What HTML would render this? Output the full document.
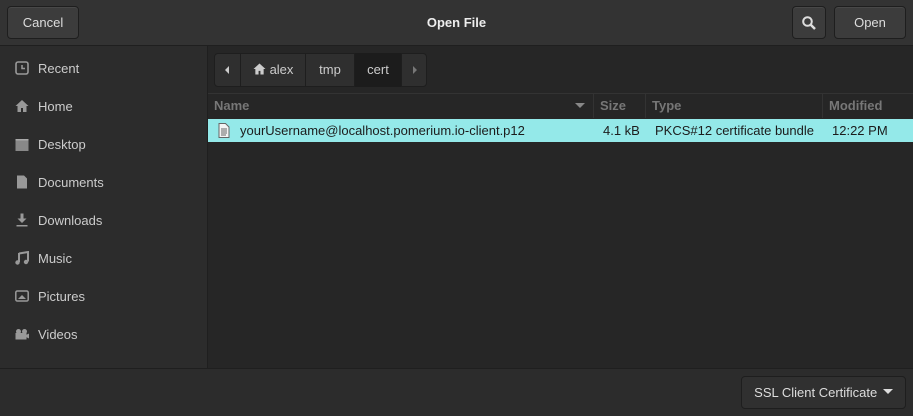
<!DOCTYPE html>
<html><head><style>
*{margin:0;padding:0;box-sizing:border-box}
body{width:913px;height:416px;background:#262626;font-family:"Liberation Sans",sans-serif;font-size:13px;color:#ddd;position:relative;overflow:hidden}
.abs{position:absolute}
.hdr{left:0;top:0;width:913px;height:46px;background:#333;border-bottom:1px solid #1f1f1f}
.btn{position:absolute;top:6px;height:33px;background:#3c3c3c;border:1px solid #1e1e1e;border-radius:4px;color:#ddd;text-align:center;line-height:31px;box-shadow:inset 0 1px #484848}
.side{left:0;top:46px;width:208px;height:322px;background:#2c2c2c;border-right:1px solid #1f1f1f}
.si{position:absolute;left:38px;color:#ccc}
.ic{position:absolute;left:15px;width:14px;height:14px}
.pb{top:53px;height:34px;background:#2f2f2f;border:1px solid #1e1e1e;border-radius:4px}
.seg{position:absolute;top:53px;height:34px;line-height:33px;color:#ccc;border-right:1px solid #1e1e1e;text-align:center}
.col{position:absolute;top:94px;height:24px;line-height:23px;color:#777;font-weight:bold;border-right:1px solid #333;padding-left:6px}
.row{left:208px;top:119px;width:705px;height:23px;background:#94e9e9;color:#1c1c1c}
.row span{position:absolute;top:4px}
.foot{left:0;top:368px;width:913px;height:48px;background:#2c2c2c;border-top:1px solid #1f1f1f}
</style></head><body>
<div class="abs hdr"></div>
<div class="btn" style="left:7px;width:72px">Cancel</div>
<div class="abs" style="left:0;width:913px;top:15px;text-align:center;font-weight:bold;color:#eee">Open File</div>
<div class="btn" style="left:792px;width:34px"><svg width="16" height="16" viewBox="0 0 16 16" style="margin-top:8px"><circle cx="6.5" cy="6.5" r="4.3" fill="none" stroke="#ddd" stroke-width="2"/><path d="M9.5 9.5L14 14" stroke="#ddd" stroke-width="2.5"/></svg></div>
<div class="btn" style="left:834px;width:72px">Open</div>

<div class="abs side"></div>
<svg class="ic" style="top:61px" viewBox="0 0 14 14"><rect x="1" y="1" width="12" height="12" rx="2" fill="none" stroke="#999" stroke-width="1.6"/><path d="M7 4v3.5h3" stroke="#999" stroke-width="1.5" fill="none"/></svg>
<div class="si" style="top:61px">Recent</div>
<svg class="ic" style="top:99px" viewBox="0 0 14 14"><path d="M7 1L0.5 7H2.5v6h3.5v-4h2v4h3.5V7h2z" fill="#999"/></svg>
<div class="si" style="top:99px">Home</div>
<svg class="ic" style="top:138px" viewBox="0 0 14 14"><rect x="0.5" y="1" width="13" height="12" fill="#888"/><rect x="0.5" y="1" width="13" height="1.5" fill="#aaa"/></svg>
<div class="si" style="top:137px">Desktop</div>
<svg class="ic" style="top:175px" viewBox="0 0 14 14"><path d="M2 0.5h7l3 3V13.5H2z" fill="#999"/></svg>
<div class="si" style="top:175px">Documents</div>
<svg class="ic" style="top:213px" viewBox="0 0 14 14"><path d="M5.5 0.5h3v5h3L7 10 2.5 5.5h3z" fill="#999"/><rect x="1.5" y="12" width="11" height="1.5" fill="#999"/></svg>
<div class="si" style="top:213px">Downloads</div>
<svg class="ic" style="top:251px" viewBox="0 0 14 14"><path d="M4 2.5L13 1v9.5" stroke="#999" stroke-width="2" fill="none"/><path d="M4 2v9" stroke="#999" stroke-width="2"/><circle cx="2.5" cy="11.5" r="2.2" fill="#999"/><circle cx="11" cy="11" r="2.2" fill="#999"/></svg>
<div class="si" style="top:251px">Music</div>
<svg class="ic" style="top:289px" viewBox="0 0 14 14"><rect x="0.8" y="2" width="12.4" height="10" rx="1.5" fill="none" stroke="#999" stroke-width="1.5"/><path d="M3 10l4-4 4 4z" fill="#999"/></svg>
<div class="si" style="top:289px">Pictures</div>
<svg class="ic" style="top:327px" viewBox="0 0 14 14"><circle cx="3.5" cy="4.5" r="2.5" fill="#999"/><circle cx="9.5" cy="4.5" r="2.5" fill="#999"/><rect x="0.5" y="6" width="11" height="6.5" fill="#999"/><path d="M11 8l3-1.5v5L11 10z" fill="#999"/></svg>
<div class="si" style="top:327px">Videos</div>

<div class="abs pb" style="left:214px;width:213px"></div>
<div class="seg" style="left:214px;width:27px"><svg width="8" height="10" viewBox="0 0 8 10" style="margin-top:12px"><path d="M6 1L2 5l4 4z" fill="#ccc"/></svg></div>
<div class="seg" style="left:241px;width:65px"><svg width="13" height="12" viewBox="0 0 14 13" style="vertical-align:-1px;margin-right:4px"><path d="M7 0.5L0.5 6.5H2.5v6h3.5v-4h2v4h3.5v-6h2z" fill="#ccc"/></svg>alex</div>
<div class="seg" style="left:306px;width:49px">tmp</div>
<div class="seg" style="left:355px;width:47px;background:#1c1c1c">cert</div>
<div class="seg" style="left:402px;width:25px;border:none"><svg width="8" height="10" viewBox="0 0 8 10" style="margin-top:12px"><path d="M2 1l4 4-4 4z" fill="#777"/></svg></div>

<div class="abs" style="left:208px;top:93px;width:705px;height:1px;background:#333"></div>
<div class="col" style="left:208px;width:386px">Name<svg width="10" height="6" style="position:absolute;right:8px;top:9px"><path d="M0 0h10L5 5z" fill="#888"/></svg></div>
<div class="col" style="left:594px;width:52px">Size</div>
<div class="col" style="left:646px;width:177px">Type</div>
<div class="col" style="left:823px;width:90px;border:none">Modified</div>
<div class="abs row">
<svg width="12" height="15" viewBox="0 0 12 15" style="position:absolute;left:10px;top:4px"><path d="M1 0.5h6.5l3.5 3.5v10.5H1z" fill="#f4f4f4" stroke="#666"/><path d="M3 6h6M3 8h6M3 10h6M3 12h5" stroke="#666"/></svg>
<span style="left:32px">yourUsername@localhost.pomerium.io-client.p12</span>
<span style="left:395px">4.1 kB</span>
<span style="left:447px">PKCS#12 certificate bundle</span>
<span style="left:624px">12:22 PM</span>
</div>

<div class="abs foot"></div>
<div class="btn" style="left:741px;top:376px;width:165px;background:#303030;box-shadow:none;color:#ddd">SSL Client Certificate <svg width="10" height="6" style="vertical-align:2px;margin-left:2px"><path d="M0 0h10L5 5z" fill="#ddd"/></svg></div>
</body></html>
